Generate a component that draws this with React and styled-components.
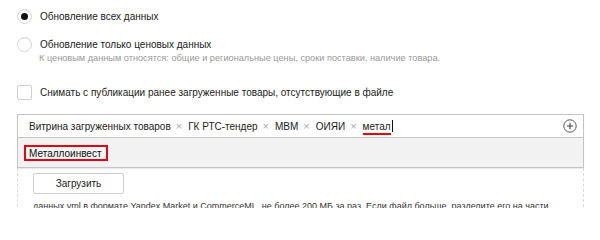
import React from 'react'
import styled, { createGlobalStyle } from 'styled-components'

const GlobalStyle = createGlobalStyle`
  html, body {
    margin: 0;
    padding: 0;
    background: #ffffff;
  }
  body {
    font-family: "Liberation Sans", Arial, sans-serif;
    color: #222222;
  }
`

const tags = ['Витрина загруженных товаров', 'ГК РТС-тендер', 'МВМ', 'ОИЯИ']

const App = () => {
  return (
    <Page>
      <GlobalStyle />
      <Option>
        <Radio checked />
        <Label>Обновление всех данных</Label>
      </Option>

      <Option top={13}>
        <Radio />
        <Label>Обновление только ценовых данных</Label>
      </Option>
      <Hint>К ценовым данным относятся: общие и региональные цены, сроки поставки, наличие товара.</Hint>

      <Option top={20}>
        <Checkbox />
        <Label>Снимать с публикации ранее загруженные товары, отсутствующие в файле</Label>
      </Option>

      <TagBox>
        <TagRow>
          {tags.map(tag => (
            <Tag key={tag}>
              {tag}
              <Remove>×</Remove>
            </Tag>
          ))}
          <Query>метал</Query>
          <Caret />
          <AddButton>
            <svg width='14' height='14' viewBox='0 0 14 14'>
              <circle cx='7' cy='7' r='6.2' fill='none' stroke='#555' strokeWidth='1' />
              <path d='M7 3.8v6.4M3.8 7h6.4' stroke='#444' strokeWidth='1.1' />
            </svg>
          </AddButton>
        </TagRow>
        <Suggestions>
          <Suggestion>Металлоинвест</Suggestion>
        </Suggestions>
      </TagBox>

      <DropArea>
        <UploadButton>Загрузить</UploadButton>
        <Note>данных yml в формате Yandex.Market и CommerceML, не более 200 МБ за раз. Если файл больше, разделите его на части</Note>
      </DropArea>
    </Page>
  )
}

export default App

const Page = styled.div`
  width: 600px;
  height: 208px;
  overflow: hidden;
  padding: 9px 0 0 17px;
  box-sizing: border-box;
`

const Option = styled.div`
  display: flex;
  align-items: center;
  gap: 8px;
  height: 15px;
  margin-top: ${({ top }) => top || 0}px;
`

const Radio = styled.span`
  box-sizing: border-box;
  width: 15px;
  height: 15px;
  border-radius: 50%;
  border: 1px solid #d4d4d4;
  background: #fff;
  box-shadow: inset 0 1px 1px rgba(0, 0, 0, 0.06);
  display: flex;
  align-items: center;
  justify-content: center;
  &::after {
    content: '';
    display: ${({ checked }) => (checked ? 'block' : 'none')};
    width: 7px;
    height: 7px;
    border-radius: 50%;
    background: #111;
  }
`

const Checkbox = styled.span`
  box-sizing: border-box;
  width: 15px;
  height: 15px;
  border-radius: 2px;
  border: 1px solid #d0d0d0;
  background: #fff;
`

const Label = styled.span`
  font-size: 10px;
  line-height: 15px;
  color: #222;
`

const Hint = styled.div`
  margin: 0 0 0 22px;
  font-size: 9.2px;
  line-height: 13px;
  color: #999;
`

const TagBox = styled.div`
  margin-top: 14px;
  width: 567px;
  box-sizing: border-box;
  border: 1px solid #c4c4c4;
  box-shadow: 0 1px 1px rgba(0, 0, 0, 0.08);
  background: #fff;
`

const TagRow = styled.div`
  display: flex;
  align-items: center;
  height: 22px;
  padding: 0 6px 0 11px;
  border-bottom: 1px solid #c4c4c4;
  font-size: 10px;
  color: #222;
`

const Tag = styled.span`
  display: flex;
  align-items: center;
  white-space: nowrap;
`

const Remove = styled.span`
  color: #aaa;
  font-size: 11px;
  margin: 0 6px 0 5px;
`

const Query = styled.span`
  position: relative;
  &::after {
    content: '';
    position: absolute;
    left: 0;
    right: 0;
    bottom: -3px;
    height: 2px;
    background: #e8000a;
  }
`

const Caret = styled.span`
  width: 1px;
  height: 12px;
  background: #111;
  margin-left: 1px;
`

const AddButton = styled.span`
  margin-left: auto;
  display: flex;
  align-items: center;
`

const Suggestions = styled.div`
  background: #f2f2f2;
  height: 29px;
  display: flex;
  align-items: center;
  padding-left: 6px;
`

const Suggestion = styled.span`
  border: 2px solid #e60012;
  padding: 1px 4px 0 3px;
  font-size: 10px;
  line-height: 11px;
  color: #111;
  background: #f4f4f4;
`

const DropArea = styled.div`
  width: 567px;
  box-sizing: border-box;
  border-left: 1px dashed #d8d8d8;
  border-right: 1px dashed #d8d8d8;
  padding: 5px 0 0 15px;
  height: 60px;
`

const UploadButton = styled.div`
  width: 91px;
  height: 21px;
  box-sizing: border-box;
  border: 1px solid #cfcfcf;
  border-radius: 2px;
  background: #fff;
  display: flex;
  align-items: center;
  justify-content: center;
  font-size: 10px;
  color: #222;
`

const Note = styled.div`
  margin-top: 6px;
  font-size: 9px;
  line-height: 12px;
  color: #333;
  white-space: nowrap;
`
